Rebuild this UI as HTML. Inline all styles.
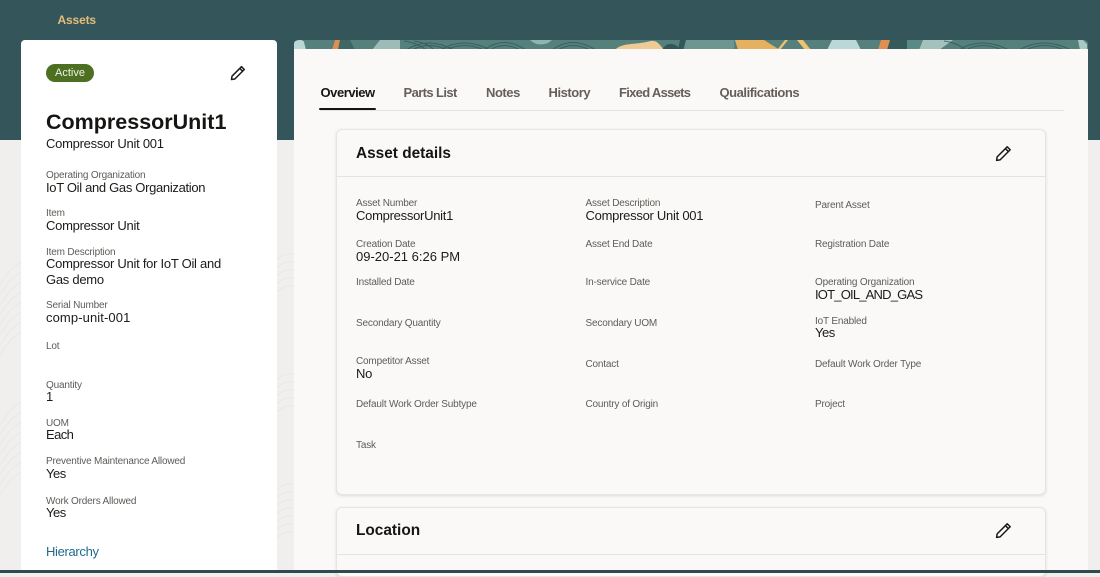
<!DOCTYPE html>
<html>
<head>
<meta charset="utf-8">
<style>
html,body{margin:0;padding:0}
body{width:1100px;height:573px;overflow:hidden;position:relative;background:#f0efed;font-family:"Liberation Sans",sans-serif;color:#161513}
.a{position:absolute;white-space:nowrap}
.l{position:absolute;white-space:nowrap;font-size:10px;letter-spacing:-.18px;line-height:14px;color:#5f5b57;margin-top:2px}
.v{position:absolute;white-space:nowrap;font-size:13px;letter-spacing:-.27px;line-height:16px;color:#1d1b19}
.t{position:absolute;top:85px;font-size:13px;letter-spacing:-.45px;line-height:16px;font-weight:bold;color:#655f5b;white-space:nowrap}
.b{position:absolute;background:#e5e3e0;height:1px}
.card{position:absolute;left:336px;width:710px;background:#fbf9f8;border:1px solid #e7e5e2;border-radius:6px;box-sizing:border-box;box-shadow:0 1px 3px rgba(0,0,0,.12)}
</style>
</head>
<body>
<div class="a" style="left:0;top:0;width:1100px;height:140px;background:#34555a"></div>
<svg class="a" style="left:0;top:140px" width="1100" height="433" fill="none" stroke="#e9e8e5" stroke-width="1">
<path d="M0 145q12-20 21-22M0 155q12-20 21-22M0 165q12-20 21-22M0 175q12-20 21-22M0 185q12-20 21-22M0 195q12-20 21-22M0 205q12-20 21-22M0 215q12-20 21-22M0 285q12-20 21-22M0 295q12-20 21-22M0 305q12-20 21-22M0 315q12-20 21-22M0 325q12-20 21-22M0 335q12-20 21-22M0 345q12-20 21-22M0 355q12-20 21-22"/>
<path d="M277 120q8-8 17-6M277 128q8-8 17-6M277 136q8-8 17-6M277 144q8-8 17-6M277 152q8-8 17-6M277 240q8-8 17-6M277 248q8-8 17-6M277 256q8-8 17-6M277 264q8-8 17-6M277 272q8-8 17-6M277 350q8-8 17-6M277 358q8-8 17-6M277 366q8-8 17-6M277 374q8-8 17-6M277 382q8-8 17-6M277 390q8-8 17-6M277 398q8-8 17-6"/>
</svg>
<!-- left card -->
<div class="a" style="left:21px;top:40px;width:256px;height:533px;background:#fff;border-radius:4px 4px 0 0"></div>
<!-- right panel banner -->
<svg class="a" style="left:294px;top:40px;border-radius:4px 4px 0 0" width="794" height="10" fill="none">
<rect width="794" height="10" fill="#55807b"/>
<path d="M0 10V2q3-2 6-2t4 2l2 8z" fill="#bcd7d8"/>
<path d="M38 10l3-10h5l-2 10z" fill="#e08e52"/>
<path d="M44 10l2-10h10l5 10z" fill="#3d6664"/>
<path d="M78 10l8-10h20v10z" fill="#9dbbb7"/>
<g stroke="#35595a" stroke-width="1" opacity=".85">
<path d="M112 10q22-14 48 0M118 10q16-9 36 0M146 10q24-14 50 0M152 10q18-9 38 0M190 10q20-15 42 0M196 10q14-9 30 0M258 10q20-15 44 0M264 10q14-9 32 0"/>
<path d="M110 1q14 2 22 9M120 1q14 2 20 9"/>
</g>
<path d="M236 0h22l-4 3q-8 3-14 0z" fill="#8fb5b2"/>
<path d="M321 10q4-5 16-6t20-3q5-1 9 4l4 5z" fill="#eecb95"/>
<path d="M368 10q4-7 10-6t8 6z" fill="#34555a"/>
<path d="M386 0h6l-3 10h-5z" fill="#34555a"/>
<path d="M392 0h48v10h-50z" fill="#6e9690"/>
<path d="M441 0h29l16 10h-42z" fill="#e5b161"/>
<path d="M483 10l8-10h3l-8 10zM503 0h6l8 10h-6z" fill="#efc26b"/>
<path d="M533 10l5-10h24l5 10z" fill="#bcd7d8"/>
<path d="M584 10l3-10h10v0l-4 10z" fill="#e08e52"/>
<path d="M593 10l3-10h17v10z" fill="#345a5a"/>
<path d="M613 0h16l-5 10h-11z" fill="#5a8a85"/>
<path d="M629 0h30l-14 10h-20z" fill="#a4c1bd"/>
<g stroke="#35595a" stroke-width="1" opacity=".85">
<path d="M665 10q22-14 50 0M672 10q16-9 36 0M725 10q24-14 52 0M732 10q18-9 38 0M650 1q14 2 22 9"/>
</g>
<path d="M784 0h5l4 4v6h-7z" fill="#a9c7c3"/>
</svg>
<div class="a" style="left:294px;top:49px;width:794px;height:524px;background:#fbf9f8"></div>
<div class="a" style="left:57.500px;top:12px;font-size:12px;line-height:16px;font-weight:bold;color:#e5bd7c;letter-spacing:-.15px">Assets</div>
<!-- left content -->
<div class="a" style="left:46px;top:64px;width:48px;height:18px;border-radius:9px;background:#4d6f22;color:#eef2e6;font-size:11px;line-height:18px;text-align:center">Active</div>
<svg class="a" style="left:229.500px;top:65px" width="16" height="16" viewBox="0 0 16 16" fill="none" stroke="#1c1a18" stroke-width="1.500" stroke-linejoin="round"><path d="M1.500 14.500l.5-3.300L11.500 1.700l2.800 2.800L4.800 14zM9.800 3.400l2.800 2.800"/></svg>
<div class="a" style="left:46px;top:109px;font-size:21.500px;line-height:27px;font-weight:bold;color:#161513">CompressorUnit1</div>
<div class="v" style="left:46px;top:136px">Compressor Unit 001</div>
<div class="l" style="left:46px;top:167px">Operating Organization</div>
<div class="v" style="left:46px;top:180px;letter-spacing:-.32px">IoT Oil and Gas Organization</div>
<div class="l" style="left:46px;top:205px">Item</div>
<div class="v" style="left:46px;top:218px">Compressor Unit</div>
<div class="l" style="left:46px;top:244px">Item Description</div>
<div class="v" style="left:46px;top:256px">Compressor Unit for IoT Oil and</div>
<div class="v" style="left:46px;top:272px">Gas demo</div>
<div class="l" style="left:46px;top:297px">Serial Number</div>
<div class="v" style="left:46px;top:310px;letter-spacing:.1px">comp-unit-001</div>
<div class="l" style="left:46px;top:338px">Lot</div>
<div class="l" style="left:46px;top:377px">Quantity</div>
<div class="v" style="left:46px;top:389px">1</div>
<div class="l" style="left:46px;top:415px">UOM</div>
<div class="v" style="left:46px;top:427px;letter-spacing:-.6px">Each</div>
<div class="l" style="left:46px;top:453px">Preventive Maintenance Allowed</div>
<div class="v" style="left:46px;top:466px;letter-spacing:-.5px">Yes</div>
<div class="l" style="left:46px;top:493px">Work Orders Allowed</div>
<div class="v" style="left:46px;top:505px;letter-spacing:-.5px">Yes</div>
<div class="v" style="left:46px;top:544px;color:#1f6a8e;letter-spacing:-.33px">Hierarchy</div>
<!-- tabs -->
<div class="t" style="left:320.500px;color:#161513">Overview</div>
<div class="t" style="left:403.500px;letter-spacing:-.6px">Parts List</div>
<div class="t" style="left:486px;letter-spacing:-.45px">Notes</div>
<div class="t" style="left:548.500px;letter-spacing:-.45px">History</div>
<div class="t" style="left:619px;letter-spacing:-.7px">Fixed Assets</div>
<div class="t" style="left:719.500px;letter-spacing:-.45px">Qualifications</div>
<div class="b" style="left:320px;top:110px;width:744px"></div>
<div class="a" style="left:319px;top:108px;width:57px;height:2px;border-radius:1px;background:#161513"></div>
<!-- card 1 -->
<div class="card" style="top:129px;height:366px"></div>
<div class="b" style="left:337px;top:176px;width:708px"></div>
<div class="a" style="left:356px;top:144px;font-size:15.400px;line-height:19px;font-weight:bold;color:#161513">Asset details</div>
<svg class="a" style="left:995px;top:145px" width="17" height="17" viewBox="0 0 16 16" fill="none" stroke="#1c1a18" stroke-width="1.400" stroke-linejoin="round"><path d="M1.500 14.500l.5-3.300L11.500 1.700l2.800 2.800L4.800 14zM9.800 3.400l2.800 2.800"/></svg>
<div class="l" style="left:356px;top:195px">Asset Number</div>
<div class="v" style="left:356px;top:208px">CompressorUnit1</div>
<div class="l" style="left:585.500px;top:195px">Asset Description</div>
<div class="v" style="left:585.500px;top:208px">Compressor Unit 001</div>
<div class="l" style="left:815px;top:197px">Parent Asset</div>
<div class="l" style="left:356px;top:236px">Creation Date</div>
<div class="v" style="left:356px;top:249px;letter-spacing:0">09-20-21 6:26 PM</div>
<div class="l" style="left:585.500px;top:236px">Asset End Date</div>
<div class="l" style="left:815px;top:236px">Registration Date</div>
<div class="l" style="left:356px;top:274px">Installed Date</div>
<div class="l" style="left:585.500px;top:274px">In-service Date</div>
<div class="l" style="left:815px;top:274px">Operating Organization</div>
<div class="v" style="left:815px;top:287px;letter-spacing:-.8px">IOT_OIL_AND_GAS</div>
<div class="l" style="left:356px;top:315px">Secondary Quantity</div>
<div class="l" style="left:585.500px;top:315px">Secondary UOM</div>
<div class="l" style="left:815px;top:313px">IoT Enabled</div>
<div class="v" style="left:815px;top:325px;letter-spacing:-.5px">Yes</div>
<div class="l" style="left:356px;top:353px">Competitor Asset</div>
<div class="v" style="left:356px;top:366px">No</div>
<div class="l" style="left:585.500px;top:356px">Contact</div>
<div class="l" style="left:815px;top:356px">Default Work Order Type</div>
<div class="l" style="left:356px;top:396px">Default Work Order Subtype</div>
<div class="l" style="left:585.500px;top:396px">Country of Origin</div>
<div class="l" style="left:815px;top:396px">Project</div>
<div class="l" style="left:356px;top:437px">Task</div>
<!-- card 2 -->
<div class="card" style="top:507px;height:70px"></div>
<div class="b" style="left:337px;top:554px;width:708px"></div>
<div class="a" style="left:356px;top:521px;font-size:15.400px;line-height:19px;font-weight:bold;color:#161513">Location</div>
<svg class="a" style="left:995px;top:522px" width="17" height="17" viewBox="0 0 16 16" fill="none" stroke="#1c1a18" stroke-width="1.400" stroke-linejoin="round"><path d="M1.500 14.500l.5-3.300L11.500 1.700l2.800 2.800L4.800 14zM9.800 3.400l2.800 2.800"/></svg>
<div class="a" style="left:0;top:570px;width:1100px;height:3px;background:#2f4b50"></div>
</body>
</html>
